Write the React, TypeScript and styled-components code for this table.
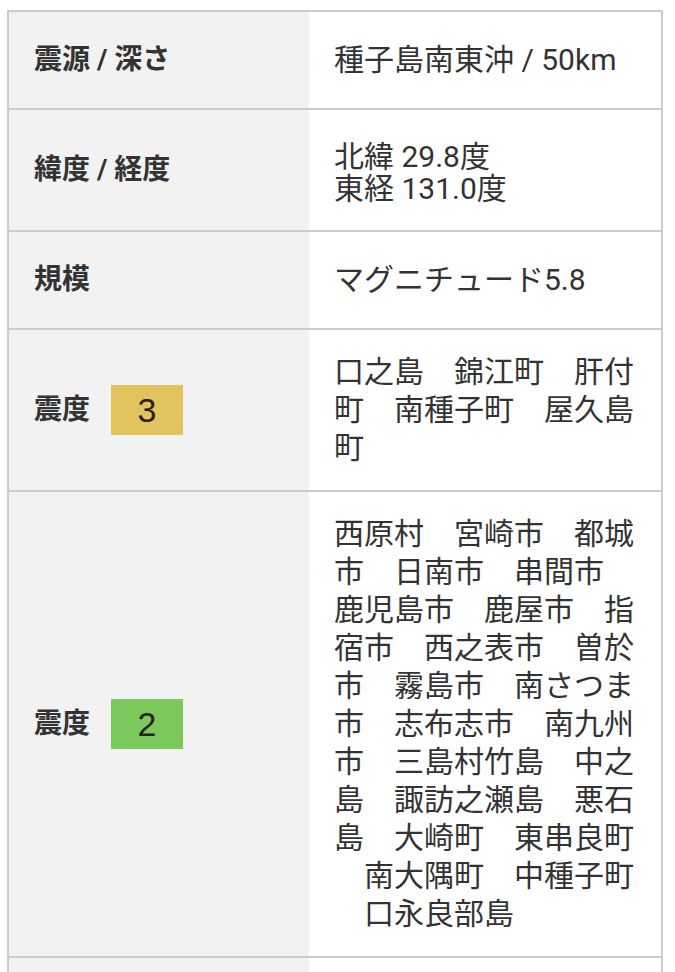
import React from "react";
import styled, { createGlobalStyle } from "styled-components";

const GlobalStyle = createGlobalStyle`
    html, body {
        margin: 0;
        padding: 0;
        background: #ffffff;
    }
    body {
        font-family: "Roboto", "Noto Sans CJK JP", sans-serif;
        color: #333333;
    }
`;

const Page = styled.div`
    padding: 10px 12px 0 7px;
`;

const Table = styled.div`
    width: 656px;
    box-sizing: border-box;
    border: 2px solid #cccccc;
    border-bottom: none;
`;

const Row = styled.div`
    display: grid;
    grid-template-columns: 300px 1fr;
    & + & {
        border-top: 2px solid #cccccc;
    }
`;

const Label = styled.div`
    display: flex;
    align-items: center;
    gap: 21px;
    padding: 23px 25px;
    background: #f2f2f2;
    font-family: "Roboto", "Noto Sans CJK JP", sans-serif;
    font-size: 28px;
    font-weight: 700;
    line-height: 50px;
    color: #333333;
`;

const Value = styled.div<{ $tight?: boolean }>`
    display: flex;
    align-items: center;
    padding: ${(p) => (p.$tight ? "31px 25px 25px" : "23px 25px")};
    background: #ffffff;
    font-size: 30px;
    line-height: ${(p) => (p.$tight ? "32px" : "38px")};
    color: #333333;
    min-width: 0;
`;

const Text = styled.div`
    width: 100%;
    white-space: break-spaces;
    line-break: anywhere;
`;

const Badge = styled.span<{ $color: string }>`
    display: inline-flex;
    align-items: center;
    justify-content: center;
    width: 72px;
    height: 50px;
    background: ${(p) => p.$color};
    font-family: "Liberation Sans", Arial, sans-serif;
    font-size: 34px;
    font-weight: 400;
    color: #26231a;
`;

const Filler = styled.div`
    height: 120px;
`;

type Item = {
    label: string;
    shindo?: { level: string; color: string };
    lines: string[];
    tight?: boolean;
};

const items: Item[] = [
    { label: "震源 / 深さ", lines: ["種子島南東沖 / 50km"] },
    { label: "緯度 / 経度", lines: ["北緯 29.8度", "東経 131.0度"], tight: true },
    { label: "規模", lines: ["マグニチュード5.8"] },
    {
        label: "震度",
        shindo: { level: "3", color: "#e2c35d" },
        lines: ["口之島　錦江町　肝付町　南種子町　屋久島町"],
    },
    {
        label: "震度",
        shindo: { level: "2", color: "#7bc95b" },
        lines: [
            "西原村　宮崎市　都城市　日南市　串間市　鹿児島市　鹿屋市　指宿市　西之表市　曽於市　霧島市　南さつま市　志布志市　南九州市　三島村竹島　中之島　諏訪之瀬島　悪石島　大崎町　東串良町　南大隅町　中種子町　口永良部島",
        ],
    },
];

const App = () => {
    return (
        <>
            <GlobalStyle />
            <Page>
                <Table>
                    {items.map((item, i) => (
                        <Row key={i}>
                            <Label>
                                {item.label}
                                {item.shindo && (
                                    <Badge $color={item.shindo.color}>{item.shindo.level}</Badge>
                                )}
                            </Label>
                            <Value $tight={item.tight}>
                                <Text>
                                    {item.lines.map((line, j) => (
                                        <div key={j}>{line}</div>
                                    ))}
                                </Text>
                            </Value>
                        </Row>
                    ))}
                    <Row>
                        <Label>
                            <Filler />
                        </Label>
                        <Value />
                    </Row>
                </Table>
            </Page>
        </>
    );
};

export default App;
